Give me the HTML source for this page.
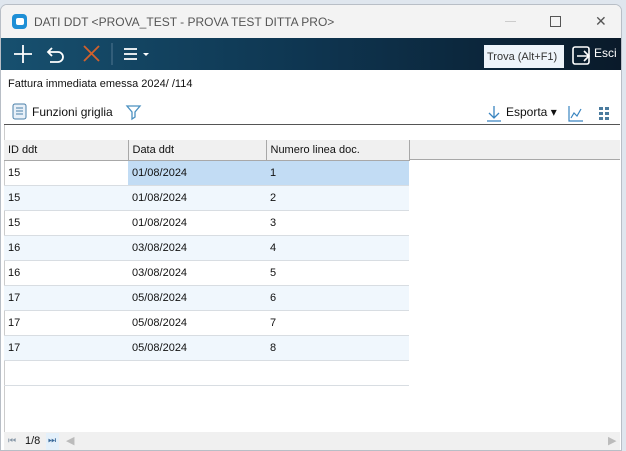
<!DOCTYPE html>
<html><head><style>
*{margin:0;padding:0;box-sizing:border-box}
body{width:626px;height:451px;background:#dfe6ee;font-family:"Liberation Sans",sans-serif;font-size:11px;color:#111;position:relative;overflow:hidden}
.win{position:absolute;left:0;top:4px;width:622px;height:447px;background:#fff;border:1px solid #b8bec6;border-radius:7px 7px 0 0;overflow:hidden}
.title{position:absolute;left:0;top:0;width:100%;height:33px;background:#f3f3f3}
.title span{position:absolute;left:33px;top:10px;font-size:12px;color:#555}
.tb{position:absolute;left:0;top:33px;width:100%;height:32px;background:linear-gradient(90deg,#17506f,#0e3550 50%,#0a1a2a)}
.abs{position:absolute}
table{border-collapse:collapse;position:absolute;left:3px;top:135px}
td{height:25px;padding-left:4px;border-bottom:1px solid #d8dde2;font-size:11px}
th{height:20px;background:#f0f0f0;font-weight:normal;text-align:left;padding-left:4px;border-right:1px solid #a8a8a8;border-bottom:1px solid #a8a8a8;font-size:11px}
tr.a td{background:#f0f7fd}
</style></head><body>
<div class="win">
<div class="title"><div class="abs" style="left:11px;top:9px;width:15px;height:15px;background:#1e8fd6;border-radius:4px"></div><div class="abs" style="left:15px;top:13px;width:8px;height:7px;background:#fff;border-radius:2px"></div><span>DATI DDT &lt;PROVA_TEST - PROVA TEST DITTA PRO&gt;</span>
<div class="abs" style="left:504px;top:16px;width:11px;height:1px;background:#ccc"></div>
<div class="abs" style="left:549px;top:11px;width:11px;height:11px;border:1px solid #555"></div>
<div class="abs" style="left:594px;top:8px;font-size:14px;color:#555">✕</div></div>
<div class="tb">
<svg class="abs" style="left:0;top:0" width="160" height="32"><g stroke="#fff" stroke-width="1.8" fill="none"><path d="M13 16h18M22 7v18"/><path d="M51 10l-4 4 4 4M47 14h10a5 5 0 010 10h-8"/><path d="M123 11h13M123 16h13M123 21h13"/></g><path d="M83 8l15 15M98 8l-15 15" stroke="#d2612c" stroke-width="1.8"/><path d="M111 5v22" stroke="#4f7590"/><path d="M142 15h6l-3 3z" fill="#fff"/></svg>
<div class="abs" style="left:483px;top:7px;width:80px;height:23px;background:#eef4fa;color:#333;font-size:11px;padding:6px 0 0 3px">Trova (Alt+F1)</div>
<svg class="abs" style="left:570px;top:8px" width="22" height="20"><rect x="2" y="1" width="16" height="17" rx="2" fill="none" stroke="#fff" stroke-width="1.6"/><path d="M6 10h12M13 5l5 5-5 5" stroke="#fff" stroke-width="1.6" fill="none"/></svg>
<div class="abs" style="left:593px;top:8px;color:#fff;font-size:12px">Esci</div>
</div>
<div class="abs" style="left:7px;top:73px;font-size:11px">Fattura immediata emessa 2024/ /114</div>
<svg class="abs" style="left:11px;top:98px" width="130" height="18"><rect x="1" y="1" width="13" height="15" rx="2" fill="#e8f0f8" stroke="#4a7fa8"/><path d="M4 5h7M4 8h7M4 11h7" stroke="#4a7fa8"/><path d="M115 3h13l-5 6v5l-3 2v-7z" fill="none" stroke="#4a90c0" stroke-width="1.3"/></svg>
<div class="abs" style="left:31px;top:100px;font-size:12px">Funzioni griglia</div>
<svg class="abs" style="left:484px;top:98px" width="130" height="20"><path d="M9 3v12M4 10l5 5 5-5M2 18h14" stroke="#3a85c0" stroke-width="1.3" fill="none"/><path d="M84 3v15h14M86 15l3-5 3 3 4-7" stroke="#3a85c0" stroke-width="1.2" fill="none"/><g fill="#4a7b9e"><rect x="114" y="4" width="4" height="3"/><rect x="120" y="4" width="4" height="3"/><rect x="114" y="9" width="4" height="3"/><rect x="120" y="9" width="4" height="3"/><rect x="114" y="14" width="4" height="3"/><rect x="120" y="14" width="4" height="3"/></g></svg>
<div class="abs" style="left:505px;top:100px;font-size:12px">Esporta ▾</div>
<div class="abs" style="left:3px;top:119px;width:616px;height:1px;background:#555"></div>
<div class="abs" style="left:3px;top:120px;width:1px;height:308px;background:#ccc"></div>
<div class="abs" style="left:3px;top:135px;width:616px;height:20px;background:#f0f0f0;border-bottom:1px solid #a8a8a8"></div>
<table>
<tr><th style="width:124px">ID ddt</th><th style="width:138px">Data ddt</th><th style="width:143px">Numero linea doc.</th></tr>
<tr><td>15</td><td style="background:#c2dcf4">01/08/2024</td><td style="background:#c2dcf4">1</td></tr>
<tr class="a"><td>15</td><td>01/08/2024</td><td>2</td></tr>
<tr><td>15</td><td>01/08/2024</td><td>3</td></tr>
<tr class="a"><td>16</td><td>03/08/2024</td><td>4</td></tr>
<tr><td>16</td><td>03/08/2024</td><td>5</td></tr>
<tr class="a"><td>17</td><td>05/08/2024</td><td>6</td></tr>
<tr><td>17</td><td>05/08/2024</td><td>7</td></tr>
<tr class="a"><td>17</td><td>05/08/2024</td><td>8</td></tr>
<tr><td></td><td></td><td></td></tr>
</table>
<div class="abs" style="left:3px;top:427px;width:616px;height:18px;background:#f0f0f0;font-size:11px"><span class="abs" style="left:4px;top:3px;color:#8898a8;font-size:9px">⏮</span><span class="abs" style="left:21px;top:3px">1/8</span><span class="abs" style="left:42px;top:1px;width:13px;height:17px;background:#e4f0fa"></span><span class="abs" style="left:44px;top:3px;color:#3a6a9a;font-size:9px">⏭</span><span class="abs" style="left:62px;top:2px;color:#bbb">◀</span><span class="abs" style="left:604px;top:2px;color:#bbb">▶</span></div>
</div>
</body></html>
